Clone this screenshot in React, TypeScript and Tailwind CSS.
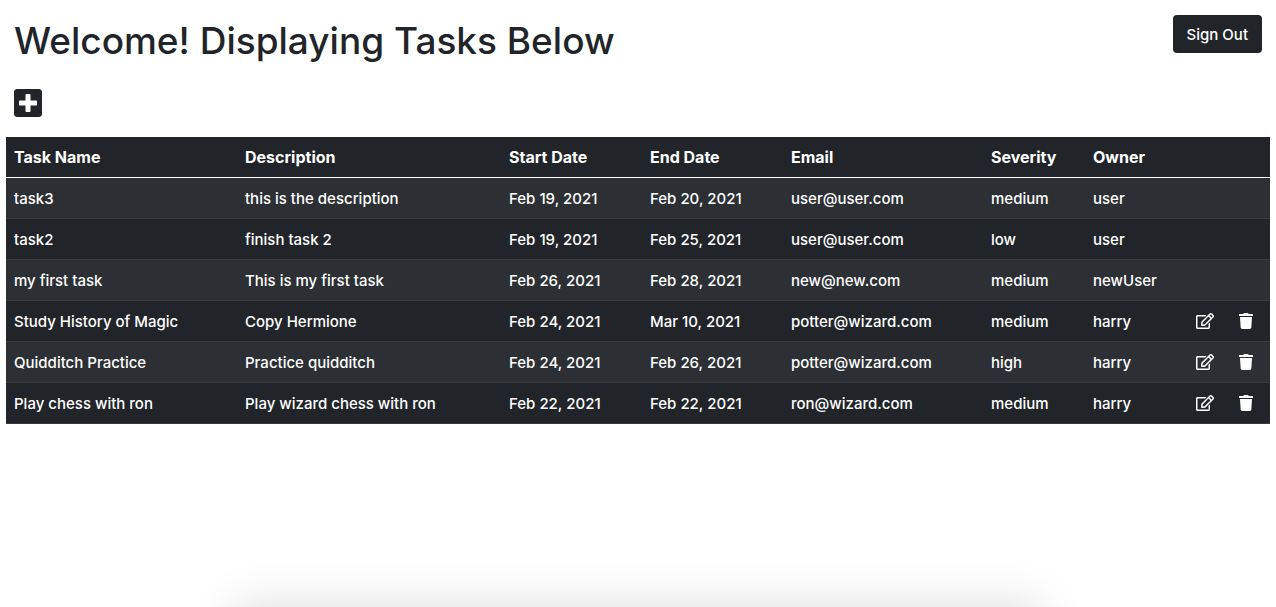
import React from "react";
import { FaPlusSquare, FaRegEdit, FaTrash } from "react-icons/fa";

interface Task {
  name: string;
  description: string;
  start: string;
  end: string;
  email: string;
  severity: "low" | "medium" | "high";
  owner: string;
}

const CURRENT_USER = "harry";

const tasks: Task[] = [
  { name: "task3", description: "this is the description", start: "Feb 19, 2021", end: "Feb 20, 2021", email: "user@user.com", severity: "medium", owner: "user" },
  { name: "task2", description: "finish task 2", start: "Feb 19, 2021", end: "Feb 25, 2021", email: "user@user.com", severity: "low", owner: "user" },
  { name: "my first task", description: "This is my first task", start: "Feb 26, 2021", end: "Feb 28, 2021", email: "new@new.com", severity: "medium", owner: "newUser" },
  { name: "Study History of Magic", description: "Copy Hermione", start: "Feb 24, 2021", end: "Mar 10, 2021", email: "potter@wizard.com", severity: "medium", owner: "harry" },
  { name: "Quidditch Practice", description: "Practice quidditch", start: "Feb 24, 2021", end: "Feb 26, 2021", email: "potter@wizard.com", severity: "high", owner: "harry" },
  { name: "Play chess with ron", description: "Play wizard chess with ron", start: "Feb 22, 2021", end: "Feb 22, 2021", email: "ron@wizard.com", severity: "medium", owner: "harry" },
];

const headings = ["Task Name", "Description", "Start Date", "End Date", "Email", "Severity", "Owner"];

function TaskRow({ task }: { task: Task }) {
  const editable = task.owner === CURRENT_USER;
  const values = [task.name, task.description, task.start, task.end, task.email, task.severity, task.owner];
  return (
    <tr className="border-b border-[#373b3e] odd:bg-[#2c3034]">
      {values.map((value, i) => (
        <td key={i} className="px-2 pt-[9px] pb-[7px]">{value}</td>
      ))}
      <td className="p-2">
        {editable && (
          <button type="button" aria-label={`Edit ${task.name}`} className="block">
            <FaRegEdit className="h-4 w-[18px]" />
          </button>
        )}
      </td>
      <td className="p-2">
        {editable && (
          <button type="button" aria-label={`Delete ${task.name}`} className="block">
            <FaTrash className="h-4 w-3.5" />
          </button>
        )}
      </td>
    </tr>
  );
}

export default function App() {
  return (
    <div className="relative min-h-screen overflow-hidden bg-white px-1.5 font-['Inter',sans-serif] text-[15px] leading-6 font-medium text-[#212529]">
      <header className="flex items-start justify-between px-2 pt-[15px]">
        <h1 className="text-[37px] leading-[52px] font-medium">Welcome! Displaying Tasks Below</h1>
        <button type="button" className="rounded bg-[#212529] px-3.5 pt-2 pb-1.5 text-white">
          Sign Out
        </button>
      </header>
      <div className="px-2 pt-[22px] pb-5">
        <button type="button" aria-label="Add task" className="block">
          <FaPlusSquare className="h-7 w-7" viewBox="0 32 448 448" />
        </button>
      </div>
      <table className="w-full table-fixed border-collapse bg-[#212529] text-left text-white">
        <colgroup>
          <col className="w-[231px]" />
          <col className="w-[264px]" />
          <col className="w-[141px]" />
          <col className="w-[141px]" />
          <col className="w-[200px]" />
          <col className="w-[102px]" />
          <col className="w-[103px]" />
          <col className="w-[43px]" />
          <col className="w-[39px]" />
        </colgroup>
        <thead>
          <tr className="border-b border-white">
            {headings.map((heading) => (
              <th key={heading} scope="col" className="p-2 text-[16px] leading-6 font-bold">{heading}</th>
            ))}
            <td />
            <td />
          </tr>
        </thead>
        <tbody>
          {tasks.map((task) => (
            <TaskRow key={task.name} task={task} />
          ))}
        </tbody>
      </table>
      <div className="absolute inset-x-[236px] top-full h-20 shadow-[0_0_48px_rgba(0,0,0,0.15)]" />
    </div>
  );
}
